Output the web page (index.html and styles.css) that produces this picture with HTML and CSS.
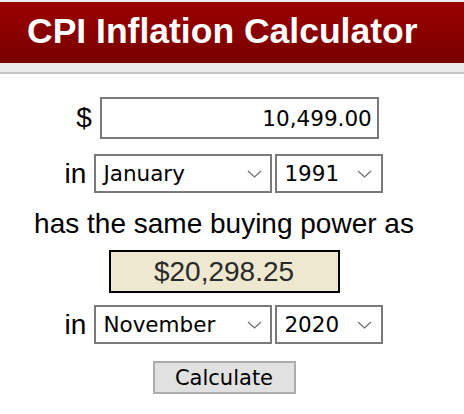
FILE: index.html
```html
<!DOCTYPE html>
<html lang="en">
<head>
<meta charset="utf-8">
<title>CPI Inflation Calculator</title>
<link rel="stylesheet" href="styles.css">
</head>
<body>
<header class="banner">
  <h1 class="banner-title">CPI Inflation Calculator</h1>
</header>
<div class="banner-rule"></div>
<main class="calc">
  <div class="row row-amount">
    <span class="label">$</span>
    <div class="amount">10,499.00</div>
  </div>
  <div class="row row-from">
    <span class="label">in</span>
    <div class="select select-month"><span>January</span><svg class="chev" width="15" height="8" viewBox="0 0 15 8"><path d="M1 1 L7.5 7 L14 1" fill="none" stroke="#6e6e6e" stroke-width="1.2"/></svg></div>
    <div class="select select-year"><span>1991</span><svg class="chev" width="15" height="8" viewBox="0 0 15 8"><path d="M1 1 L7.5 7 L14 1" fill="none" stroke="#6e6e6e" stroke-width="1.2"/></svg></div>
  </div>
  <p class="phrase">has the same buying power as</p>
  <div class="result">$20,298.25</div>
  <div class="row row-to">
    <span class="label">in</span>
    <div class="select select-month"><span>November</span><svg class="chev" width="15" height="8" viewBox="0 0 15 8"><path d="M1 1 L7.5 7 L14 1" fill="none" stroke="#6e6e6e" stroke-width="1.2"/></svg></div>
    <div class="select select-year"><span>2020</span><svg class="chev" width="15" height="8" viewBox="0 0 15 8"><path d="M1 1 L7.5 7 L14 1" fill="none" stroke="#6e6e6e" stroke-width="1.2"/></svg></div>
  </div>
  <button class="calc-btn" type="button">Calculate</button>
</main>
</body>
</html>
```

FILE: styles.css
```css
* { box-sizing: border-box; }

body {
  margin: 0;
  background: #ffffff;
  font-family: "Liberation Sans", Arial, sans-serif;
  color: #000;
}

.banner {
  border-top: 2px solid #ececec;
  height: 63px;
  background: linear-gradient(#9b0000, #780000);
}

.banner-title {
  margin: 0;
  padding-left: 27px;
  height: 61px;
  line-height: 59px;
  font-size: 35.5px;
  font-weight: bold;
  color: #ffffff;
  white-space: nowrap;
}

.banner-rule {
  height: 11px;
  background: #ebebeb;
  border-bottom: 2px solid #c6c6c6;
}

.calc {
  width: 448px;
  display: flex;
  flex-direction: column;
  align-items: center;
}

.row {
  display: flex;
  align-items: center;
}

.label {
  font-size: 28px;
  line-height: 32px;
  margin-right: 8px;
}

.row-amount { margin-top: 23px; margin-left: 7px; }
.row-from { margin-top: 15px; }
.row-to { margin-top: 12px; }

.amount {
  width: 279px;
  height: 42px;
  border: 2px solid #7a7a7a;
  padding-right: 5px;
  display: flex;
  align-items: center;
  justify-content: flex-end;
  font-family: "DejaVu Sans", Verdana, sans-serif;
  font-size: 21.5px;
}

.select {
  height: 39px;
  border: 2px solid #7a7a7a;
  display: flex;
  align-items: center;
  justify-content: space-between;
  padding-left: 7px;
  padding-right: 8px;
  font-family: "DejaVu Sans", Verdana, sans-serif;
  font-size: 21.5px;
}

.select-month { width: 178px; }
.select-year { width: 108px; margin-left: 3px; padding-right: 9px; }

.chev { display: block; }

.phrase {
  margin: 15px 0 0;
  font-size: 28px;
  line-height: 32px;
  white-space: nowrap;
}

.result {
  margin-top: 10px;
  width: 231px;
  height: 43px;
  border: 2px solid #000;
  background: #ede8cf;
  display: flex;
  align-items: center;
  justify-content: center;
  font-size: 28px;
  color: #2a2a2a;
}

.calc-btn {
  margin-top: 17px;
  width: 143px;
  height: 33px;
  border: 2px solid #adadad;
  background: #e1e1e1;
  font-family: "DejaVu Sans", Verdana, sans-serif;
  font-size: 21px;
  color: #000;
  padding: 0;
}
```
